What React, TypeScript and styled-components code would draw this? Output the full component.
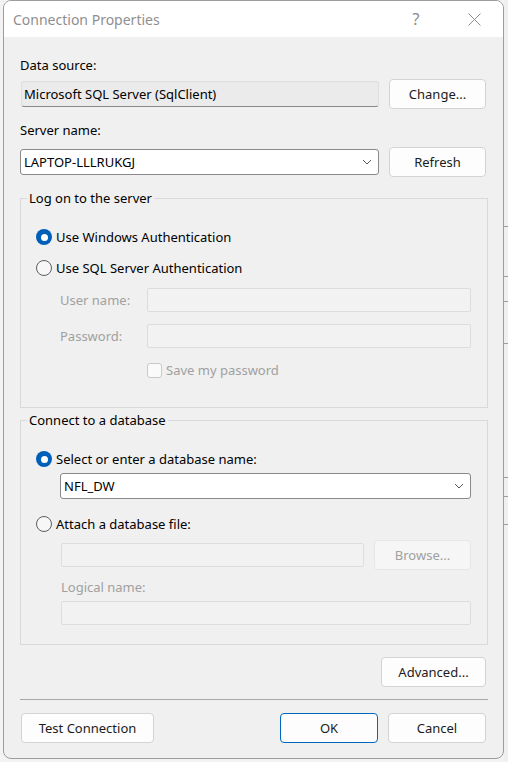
import styled, { createGlobalStyle, css } from 'styled-components';

const GlobalStyle = createGlobalStyle`
	html, body {
		margin: 0;
		padding: 0;
		background: #f2f2f2;
	}
	body {
		font-family: 'Noto Sans', 'Open Sans', sans-serif;
		font-size: 13px;
		color: #000;
	}
	* {
		box-sizing: border-box;
	}
`;

// lines of the window that sits behind the dialog (right edge strip)
const behindRows = [227, 50, 25, 42, 134, 19, 28];

const Chevron = () => (
	<svg width='10' height='6' viewBox='0 0 10 6'>
		<polyline points='1,1 5,5 9,1' fill='none' stroke='#5a5a5a' strokeWidth='1' />
	</svg>
);

const CloseGlyph = () => (
	<svg width='13' height='13' viewBox='0 0 13 13'>
		<path d='M0.5 0.5 L12.5 12.5 M12.5 0.5 L0.5 12.5' stroke='#8c8c8c' strokeWidth='1' />
	</svg>
);

const App = () => {
	return (
		<>
			<GlobalStyle />
			<Screen>
				<EdgeGap />
				<Window>
					<TitleBar>
						<Title>Connection Properties</Title>
						<CaptionButton>?</CaptionButton>
						<CaptionButton>
							<CloseGlyph />
						</CaptionButton>
					</TitleBar>
					<Body>
						<Label>Data source:</Label>
						<FieldRow $mt={5}>
							<ReadOnlyBox>Microsoft SQL Server (SqlClient)</ReadOnlyBox>
							<Button>Change...</Button>
						</FieldRow>
						<Label $mt={12}>Server name:</Label>
						<FieldRow $mt={8}>
							<Combo $offset={0}>
								<span>LAPTOP-LLLRUKGJ</span>
								<Chevron />
							</Combo>
							<Button>Refresh</Button>
						</FieldRow>

						<Group $mt={12}>
							<GroupTitle>Log on to the server</GroupTitle>
							<GroupBody $pb={27}>
								<Choice>
									<RadioMark $checked />
									Use Windows Authentication
								</Choice>
								<Choice $mt={11}>
									<RadioMark $checked={false} />
									Use SQL Server Authentication
								</Choice>
								<CredGrid>
									<Label $disabled>User name:</Label>
									<DisabledBox />
									<Label $disabled>Password:</Label>
									<DisabledBox />
									<CheckRow>
										<CheckMark />
										Save my password
									</CheckRow>
								</CredGrid>
							</GroupBody>
						</Group>

						<Group $mt={3}>
							<GroupTitle>Connect to a database</GroupTitle>
							<GroupBody $pb={19}>
								<Choice>
									<RadioMark $checked />
									Select or enter a database name:
								</Choice>
								<Indent $mt={4} $left={24}>
									<Combo $offset={26}>
										<span>NFL_DW</span>
										<Chevron />
									</Combo>
								</Indent>
								<Choice $mt={15}>
									<RadioMark $checked={false} />
									Attach a database file:
								</Choice>
								<Indent $mt={6} $left={25}>
									<FileRow>
										<DisabledBox />
										<Button disabled>Browse...</Button>
									</FileRow>
								</Indent>
								<Indent $mt={8} $left={25}>
									<Label $disabled>Logical name:</Label>
								</Indent>
								<Indent $mt={5} $left={25}>
									<DisabledBox />
								</Indent>
							</GroupBody>
						</Group>

						<ActionRow $mt={12}>
							<Button $width={105}>Advanced...</Button>
						</ActionRow>
						<Separator />
						<Footer>
							<Button $width={133}>Test Connection</Button>
							<Spacer />
							<Button $width={98} $primary>
								OK
							</Button>
							<Button $width={98}>Cancel</Button>
						</Footer>
					</Body>
				</Window>
				<BehindPane>
					{behindRows.map((h, i) => (
						<BehindRow key={i} style={{ height: h }} />
					))}
					<BehindFill />
				</BehindPane>
			</Screen>
		</>
	);
};

const Screen = styled.div`
	display: flex;
	width: 508px;
	height: 762px;
	overflow: hidden;
	background: #f3f3f3;
`;

const EdgeGap = styled.div`
	width: 3px;
	flex: none;
`;

const Window = styled.div`
	display: flex;
	flex-direction: column;
	width: 501px;
	height: 759px;
	flex: none;
	border: 1px solid #9c9c9c;
	border-radius: 8px;
	overflow: hidden;
	background: #f0f0f0;
`;

const TitleBar = styled.div`
	display: flex;
	align-items: center;
	height: 36px;
	flex: none;
	padding-left: 9px;
	background: #ffffff;
`;

const Title = styled.div`
	flex: 1;
	font-size: 14px;
	color: #8f8f8f;
`;

const CaptionButton = styled.div`
	display: flex;
	align-items: center;
	justify-content: center;
	width: 58px;
	height: 36px;
	font-size: 16px;
	color: #8c8c8c;
`;

const Body = styled.div`
	flex: 1;
	display: flex;
	flex-direction: column;
	padding: 19px 15px 0 16px;
`;

const Label = styled.div<{ $mt?: number; $disabled?: boolean }>`
	line-height: 18px;
	margin-top: ${(p) => p.$mt ?? 0}px;
	color: ${(p) => (p.$disabled ? '#a0a0a0' : '#000')};
	white-space: nowrap;
`;

const FieldRow = styled.div<{ $mt: number }>`
	display: grid;
	grid-template-columns: 1fr 97px;
	column-gap: 10px;
	align-items: center;
	margin-top: ${(p) => p.$mt}px;
	padding: 0 2px 0 1px;
`;

const ReadOnlyBox = styled.div`
	display: flex;
	align-items: center;
	height: 26px;
	padding: 0 2px;
	background: #ebebeb;
	border: 1px solid #dedede;
	border-bottom-color: #8a8a8a;
	border-radius: 3px;
	white-space: nowrap;
`;

const Combo = styled.div<{ $offset: number }>`
	display: flex;
	align-items: center;
	justify-content: space-between;
	height: 26px;
	margin-left: ${(p) => (p.$offset ? 0 : -1)}px;
	padding: 0 6px 0 3px;
	background: #ffffff;
	border: 1px solid #8a8a8a;
	border-radius: 3px;
`;

const DisabledBox = styled.div`
	height: 24px;
	background: #f2f2f2;
	border: 1px solid #dddddd;
	border-radius: 2px;
`;

const Button = styled.button<{ $primary?: boolean; $width?: number }>`
	height: 30px;
	width: ${(p) => (p.$width ? `${p.$width}px` : 'auto')};
	padding: 0;
	font: inherit;
	color: #1b1b1b;
	background: #fdfdfd;
	border: 1px solid ${(p) => (p.$primary ? '#0067c0' : '#d3d3d3')};
	border-radius: 4px;

	&:disabled {
		color: #a0a0a0;
		background: #f6f6f6;
		border-color: #e6e6e6;
	}
`;

const Group = styled.fieldset<{ $mt: number }>`
	margin: ${(p) => p.$mt}px 0 0 0;
	padding: 0;
	min-width: 0;
	border: 1px solid #d9d9d9;
`;

const GroupTitle = styled.legend`
	margin-left: 6px;
	padding: 0 2px;
	line-height: 18px;
`;

const GroupBody = styled.div<{ $pb: number }>`
	display: flex;
	flex-direction: column;
	padding: 20px 16px ${(p) => p.$pb}px 15px;
`;

const Choice = styled.label<{ $mt?: number }>`
	display: flex;
	align-items: center;
	gap: 4px;
	height: 20px;
	margin-top: ${(p) => p.$mt ?? 0}px;
	white-space: nowrap;
`;

const RadioMark = styled.span<{ $checked: boolean }>`
	flex: none;
	width: 16px;
	height: 16px;
	border-radius: 50%;
	${(p) =>
		p.$checked
			? css`
					display: flex;
					align-items: center;
					justify-content: center;
					background: #005fb8;
					&::after {
						content: '';
						width: 7px;
						height: 7px;
						border-radius: 50%;
						background: #ffffff;
					}
			  `
			: css`
					border: 1px solid #5e5e5e;
					background: #f7f7f7;
			  `}
`;

const CredGrid = styled.div`
	display: grid;
	grid-template-columns: 87px 1fr;
	row-gap: 12px;
	align-items: center;
	margin: 10px 0 0 24px;
`;

const CheckRow = styled.div`
	grid-column: 2;
	display: flex;
	align-items: center;
	gap: 4px;
	height: 20px;
	color: #a0a0a0;
`;

const CheckMark = styled.span`
	flex: none;
	width: 15px;
	height: 15px;
	border: 1px solid #c9c9c9;
	border-radius: 3px;
	background: #fafafa;
`;

const Indent = styled.div<{ $mt: number; $left: number }>`
	margin: ${(p) => p.$mt}px 0 0 ${(p) => p.$left}px;
`;

const FileRow = styled.div`
	display: grid;
	grid-template-columns: 1fr 97px;
	column-gap: 10px;
	align-items: center;
`;

const ActionRow = styled.div<{ $mt: number }>`
	display: flex;
	justify-content: flex-end;
	margin-top: ${(p) => p.$mt}px;
	padding-right: 2px;
`;

const Separator = styled.div`
	height: 1px;
	margin-top: 12px;
	background: #a8a8a8;
`;

const Footer = styled.div`
	display: flex;
	gap: 10px;
	margin-top: 13px;
	padding: 0 2px 0 1px;
`;

const Spacer = styled.div`
	flex: 1;
`;

const BehindPane = styled.div`
	flex: 1;
	display: flex;
	flex-direction: column;
	background: #f0f0f0;
`;

const BehindRow = styled.div`
	flex: none;
	border-bottom: 1px solid #9d9d9d;
`;

const BehindFill = styled.div`
	flex: 1;
`;

export default App;
